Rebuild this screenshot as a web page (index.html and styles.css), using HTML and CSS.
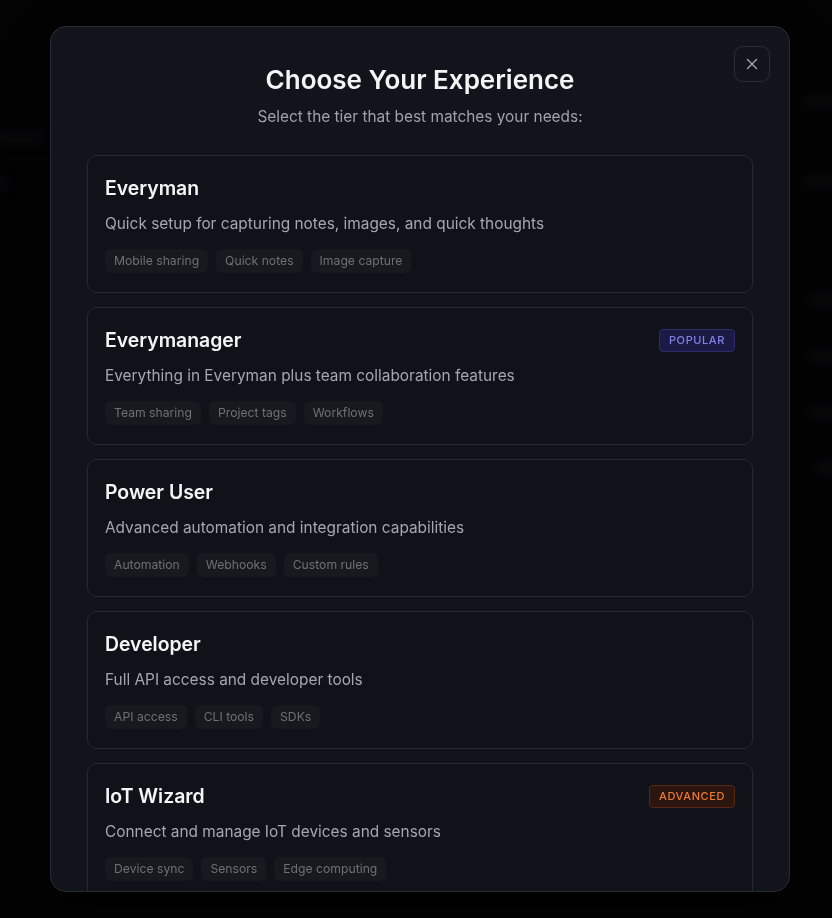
FILE: index.html
```html
<!DOCTYPE html>
<html lang="en">
<head>
<meta charset="utf-8">
<title>Choose Your Experience</title>
<link rel="stylesheet" href="styles.css">
</head>
<body>
<div class="backdrop">
  <div class="ghost ghost-a"></div>
  <div class="ghost ghost-b"></div>
  <div class="ghost ghost-c"></div>
  <div class="ghost ghost-d"></div>
  <div class="ghost ghost-e"></div>
  <div class="ghost ghost-f"></div>
  <div class="ghost ghost-g"></div>
  <div class="ghost ghost-h"></div>
</div>
<div class="overlay">
  <div class="modal">
    <button class="close" aria-label="Close">
      <svg width="12" height="12" viewBox="0 0 12 12" fill="none" stroke="currentColor" stroke-width="1.4" stroke-linecap="round"><path d="M1.5 1.5l9 9M10.5 1.5l-9 9"/></svg>
    </button>
    <header class="head">
      <h1 class="title">Choose Your Experience</h1>
      <p class="subtitle">Select the tier that best matches your needs:</p>
    </header>
    <div class="tiers">
      <div class="tier">
        <div class="tier-top"><h2 class="tier-name">Everyman</h2></div>
        <p class="tier-desc">Quick setup for capturing notes, images, and quick thoughts</p>
        <div class="tags"><span class="tag">Mobile sharing</span><span class="tag">Quick notes</span><span class="tag">Image capture</span></div>
      </div>
      <div class="tier">
        <div class="tier-top"><h2 class="tier-name">Everymanager</h2><span class="badge badge-popular">Popular</span></div>
        <p class="tier-desc">Everything in Everyman plus team collaboration features</p>
        <div class="tags"><span class="tag">Team sharing</span><span class="tag">Project tags</span><span class="tag">Workflows</span></div>
      </div>
      <div class="tier">
        <div class="tier-top"><h2 class="tier-name">Power User</h2></div>
        <p class="tier-desc">Advanced automation and integration capabilities</p>
        <div class="tags"><span class="tag">Automation</span><span class="tag">Webhooks</span><span class="tag">Custom rules</span></div>
      </div>
      <div class="tier">
        <div class="tier-top"><h2 class="tier-name">Developer</h2></div>
        <p class="tier-desc">Full API access and developer tools</p>
        <div class="tags"><span class="tag">API access</span><span class="tag">CLI tools</span><span class="tag">SDKs</span></div>
      </div>
      <div class="tier">
        <div class="tier-top"><h2 class="tier-name">IoT Wizard</h2><span class="badge badge-advanced">Advanced</span></div>
        <p class="tier-desc">Connect and manage IoT devices and sensors</p>
        <div class="tags"><span class="tag">Device sync</span><span class="tag">Sensors</span><span class="tag">Edge computing</span></div>
      </div>
    </div>
  </div>
</div>
</body>
</html>
```

FILE: styles.css
```css
* { box-sizing: border-box; }
html, body { margin: 0; height: 100%; }
body {
  background: #030304;
  font-family: Inter, "Noto Sans", "Liberation Sans", sans-serif;
  overflow: hidden;
}
.backdrop { position: fixed; inset: 0; }
.ghost {
  position: absolute;
  height: 10px;
  border-radius: 5px;
  background: #161619;
  filter: blur(7px);
  opacity: 0.55;
}
.ghost-a { left: -10px; top: 132px; width: 60px; }
.ghost-b { left: -10px; top: 178px; width: 20px; }
.ghost-c { left: 800px; top: 97px; width: 40px; }
.ghost-d { left: 800px; top: 177px; width: 40px; }
.ghost-e { left: 806px; top: 295px; width: 40px; }
.ghost-f { left: 806px; top: 352px; width: 40px; }
.ghost-g { left: 806px; top: 408px; width: 40px; }
.ghost-h { left: 810px; top: 463px; width: 40px; }

.overlay {
  position: fixed;
  inset: 0;
  display: flex;
  align-items: center;
  padding-left: 50px;
}
.modal {
  position: relative;
  width: 740px;
  height: 866px;
  background: #11141b;
  border: 1px solid #2a2c33;
  border-radius: 16px;
  padding: 35px 36px 0;
  overflow: hidden;
  box-shadow: 0 20px 40px rgba(0,0,0,0.6);
}
.close {
  position: absolute;
  top: 19px;
  right: 19px;
  width: 36px;
  height: 36px;
  border-radius: 9px;
  border: 1px solid #2c2f37;
  background: transparent;
  color: #a3a6ad;
  display: flex;
  align-items: center;
  justify-content: center;
  padding: 0;
}
.head { text-align: center; }
.title {
  margin: 0;
  font-size: 26px;
  line-height: 36px;
  font-weight: 600;
  color: #f4f4f5;
}
.subtitle {
  margin: 7px 0 0;
  font-size: 15.4px;
  line-height: 24px;
  color: #a1a1aa;
}
.tiers {
  margin-top: 26px;
  display: flex;
  flex-direction: column;
  gap: 14px;
}
.tier {
  border: 1px solid #272a31;
  border-radius: 10px;
  background: #0f1218;
  padding: 18px 17px 19px;
}
.tier-top {
  display: flex;
  align-items: center;
  justify-content: space-between;
}
.tier-name {
  margin: 0;
  font-size: 19.4px;
  line-height: 28px;
  font-weight: 600;
  color: #f5f5f5;
}
.tier-desc {
  margin: 10px 0 0;
  font-size: 15.4px;
  line-height: 24px;
  color: #a6a7ac;
}
.tags {
  margin-top: 13px;
  display: flex;
  gap: 8px;
}
.tag {
  height: 24px;
  line-height: 24px;
  padding: 0 9px;
  border-radius: 6px;
  background: #18191e;
  color: #6e7076;
  font-size: 12.2px;
}
.badge {
  height: 23px;
  line-height: 21px;
  padding: 0 9px;
  border-radius: 4px;
  font-size: 11px;
  letter-spacing: 0.6px;
  text-transform: uppercase;
  font-weight: 500;
}
.badge-popular {
  background: #1b1a45;
  border: 1px solid #2e2c6b;
  color: #7f84e6;
}
.badge-advanced {
  background: #2b150f;
  border: 1px solid #5b2614;
  color: #ec7a30;
}
```
